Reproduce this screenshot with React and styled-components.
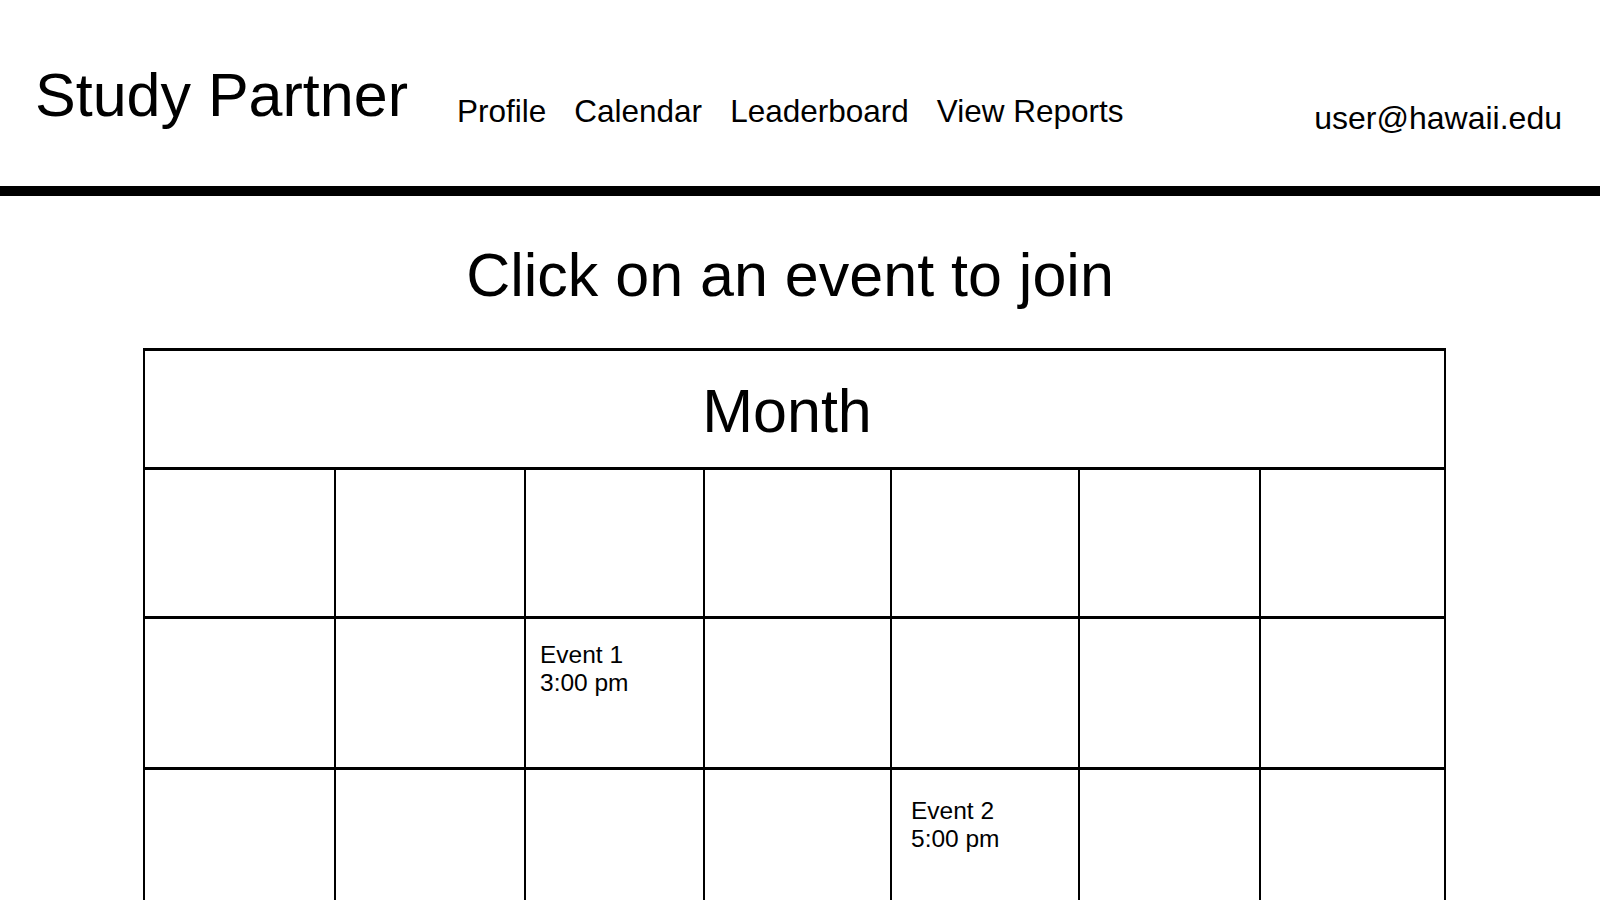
import React from "react"
import styled, { createGlobalStyle } from "styled-components"

const GlobalStyle = createGlobalStyle`
  html, body {
    margin: 0;
    padding: 0;
    background: #fff;
    color: #000;
    font-family: "Liberation Sans", Arial, sans-serif;
  }
`

const Header = styled.header`
  display: flex;
  align-items: flex-start;
  height: 126px;
  padding: 60px 38px 0 35px;
  border-bottom: 10px solid #000;
  .brand {
    margin: 0;
    font-size: 61px;
    font-weight: normal;
    line-height: normal;
    white-space: nowrap;
  }
  .nav {
    display: flex;
    gap: 28px;
    margin: 33px 0 0 49px;
    font-size: 31.5px;
    white-space: nowrap;
  }
  .user {
    margin: 40px 0 0 auto;
    font-size: 32px;
  }
`

const Main = styled.main`
  width: 1303px;
  margin-left: 143px;
  .prompt {
    margin: 44px 0 0;
    padding-right: 9px;
    font-size: 61px;
    font-weight: normal;
    line-height: normal;
    text-align: center;
  }
`

const Calendar = styled.section`
  margin-top: 38px;
  border-top: 3px solid #000;
  border-left: 2px solid #000;
  border-right: 2px solid #000;
  .month {
    height: 91px;
    padding: 25px 15px 0 0;
    border-bottom: 3px solid #000;
    font-size: 61px;
    line-height: normal;
    text-align: center;
  }
`

const Week = styled.div`
  display: grid;
  grid-template-columns: 191px 190px 179px 187px 188px 181px 183px;
  height: ${({ $height }) => $height}px;
  border-bottom: 3px solid #000;
`

const Day = styled.div`
  border-right: 2px solid #000;
  &:last-child {
    border-right: none;
  }
`

const Event = styled.div`
  padding: ${({ $top }) => $top}px 0 0 ${({ $left }) => $left}px;
  font-size: 24.5px;
  line-height: 28px;
  cursor: pointer;
`

const weeks = [
  { height: 146, events: {} },
  { height: 148, events: { 2: { name: "Event 1", time: "3:00 pm", top: 22, left: 14 } } },
  { height: 150, events: { 4: { name: "Event 2", time: "5:00 pm", top: 27, left: 19 } } }
]

const App = () => (
  <>
    <GlobalStyle />
    <Header>
      <h1 className="brand">Study Partner</h1>
      <nav className="nav">
        <span>Profile</span>
        <span>Calendar</span>
        <span>Leaderboard</span>
        <span>View Reports</span>
      </nav>
      <div className="user">user@hawaii.edu</div>
    </Header>
    <Main>
      <h2 className="prompt">Click on an event to join</h2>
      <Calendar>
        <div className="month">Month</div>
        {weeks.map((week, w) => (
          <Week key={w} $height={week.height}>
            {[0, 1, 2, 3, 4, 5, 6].map(d => {
              const ev = week.events[d]
              return (
                <Day key={d}>
                  {ev && (
                    <Event $top={ev.top} $left={ev.left}>
                      {ev.name}
                      <br />
                      {ev.time}
                    </Event>
                  )}
                </Day>
              )
            })}
          </Week>
        ))}
      </Calendar>
    </Main>
  </>
)

export default App
